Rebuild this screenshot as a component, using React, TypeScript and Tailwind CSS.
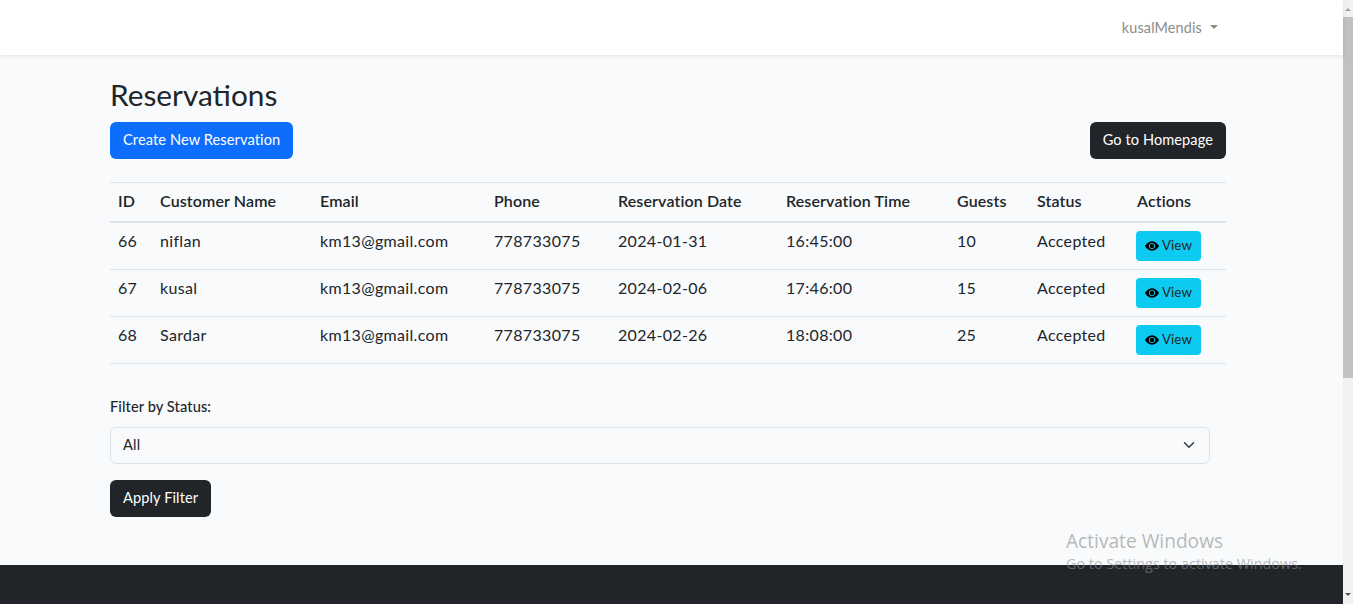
import React from "react";

const rows = [
  ["66", "niflan", "km13@gmail.com", "778733075", "2024-01-31", "16:45:00", "10", "Accepted"],
  ["67", "kusal", "km13@gmail.com", "778733075", "2024-02-06", "17:46:00", "15", "Accepted"],
  ["68", "Sardar", "km13@gmail.com", "778733075", "2024-02-26", "18:08:00", "25", "Accepted"],
];
const heads = ["ID", "Customer Name", "Email", "Phone", "Reservation Date", "Reservation Time", "Guests", "Status", "Actions"];
const font = { fontFamily: "Lato, 'Noto Sans', sans-serif" };

function Eye() {
  return (
    <svg width="14" height="14" viewBox="0 0 16 16" fill="#000" className="shrink-0">
      <path d="M10.5 8a2.5 2.5 0 1 1-5 0 2.5 2.5 0 0 1 5 0z" />
      <path d="M0 8s3-5.5 8-5.5S16 8 16 8s-3 5.5-8 5.5S0 8 0 8zm8 3.5a3.5 3.5 0 1 0 0-7 3.5 3.5 0 0 0 0 7z" />
    </svg>
  );
}

export default function App() {
  return (
    <div className="relative flex h-[604px] w-[1353px] overflow-hidden bg-[#f8fafc] text-[#212529]" style={font}>
      <div className="flex w-[1343px] flex-col">
        <nav className="z-10 flex h-[55px] shrink-0 items-center justify-end bg-white pr-[125px] shadow-[0_2px_4px_rgba(0,0,0,0.075)]">
          <span className="text-[14.4px] tracking-[0.15px] text-[#8c8c8c]">kusalMendis</span>
          <span className="ml-[8px] mb-[2px] h-0 w-0 border-x-[4.5px] border-t-[4.5px] border-x-transparent border-t-[#8c8c8c]" />
        </nav>
        <main className="flex-1 pl-[110px] pr-[117px]">
          <h2 className="mt-[21px] text-[29.8px] leading-[37px] text-[#212529]">Reservations</h2>
          <div className="mt-[9px] flex justify-between">
            <button className="h-[37px] rounded-md bg-[#0d6efd] px-[13px] pb-[1px] text-[14.6px] tracking-[0.1px] text-white">Create New Reservation</button>
            <button className="h-[37px] rounded-md bg-[#212529] px-[13px] pb-[1px] text-[14.6px] tracking-[0.07px] text-white">Go to Homepage</button>
          </div>
          <table className="mt-[23px] w-[1116px] table-fixed border-collapse text-[16px]">
            <colgroup>
              <col className="w-[42px]" />
              <col className="w-[160px]" />
              <col className="w-[174px]" />
              <col className="w-[124px]" />
              <col className="w-[168px]" />
              <col className="w-[171px]" />
              <col className="w-[80px]" />
              <col className="w-[100px]" />
              <col className="w-[97px]" />
            </colgroup>
            <thead>
              <tr className="h-[39px] border-t border-b-2 border-t-[#dee2e6] border-b-[#dee2e6]">
                {heads.map((h) => (
                  <th key={h} className="px-2 pb-[1px] text-left font-semibold tracking-[0.12px]">{h}</th>
                ))}
              </tr>
            </thead>
            <tbody>
              {rows.map((r) => (
                <tr key={r[0]} className="h-[47px] border-b border-[#dee2e6]">
                  {r.map((c, i) => (
                    <td key={i} className="px-2 pt-[6px] pb-[16px] align-top leading-[24px] tracking-[0.33px] text-[#212529]">{c}</td>
                  ))}
                  <td className="p-0 pl-[7px] align-top pt-[8px]">
                    <button className="flex h-[30px] w-[65px] items-center justify-center gap-[3px] rounded-[4px] bg-[#0dcaf0] text-[13.4px] text-[#212529]">
                      <Eye />
                      <span className="tracking-[0.1px]">View</span>
                    </button>
                  </td>
                </tr>
              ))}
            </tbody>
          </table>
          <label className="mt-[33px] block text-[14.6px] font-medium leading-[20px] tracking-[0.1px]">Filter by Status:</label>
          <div className="mt-[10px] flex h-[37px] w-[1100px] items-center justify-between rounded-md border border-[#dee2e6] pl-[12px] pr-[14px] text-[14.6px] text-[#212529]">
            <span className="tracking-[0.2px]">All</span>
            <svg width="12" height="12" viewBox="0 0 16 16" fill="none">
              <path d="m2 5 6 6 6-6" stroke="#343a40" strokeWidth="2" strokeLinecap="round" strokeLinejoin="round" />
            </svg>
          </div>
          <button className="mt-[16px] block h-[37px] rounded-md bg-[#212529] px-[13px] text-[14.6px] tracking-[0.1px] text-white">Apply Filter</button>
        </main>
        <footer className="h-[39px] shrink-0 bg-[#212529]" />
      </div>
      <div className="flex w-[10px] flex-col items-center bg-[#f1f1f1]">
        <svg width="10" height="17" viewBox="0 0 10 17" className="shrink-0"><path d="M2 11 5 8l3 3z" fill="#a3a3a3" /></svg>
        <div className="h-[361px] w-full bg-[#c1c1c1]" />
        <div className="flex-1" />
        <svg width="10" height="17" viewBox="0 0 10 17" className="shrink-0"><path d="M2 6l3 3 3-3z" fill="#505050" /></svg>
      </div>
      <div className="pointer-events-none absolute left-[1066px] top-[529px] text-[#8a8a8a]/60" style={{ fontFamily: "'Open Sans', 'Noto Sans', sans-serif" }}>
        <div className="text-[19.15px] leading-[25px]">Activate Windows</div>
        <div className="text-[14.4px] leading-[20px]">Go to Settings to activate Windows.</div>
      </div>
    </div>
  );
}
